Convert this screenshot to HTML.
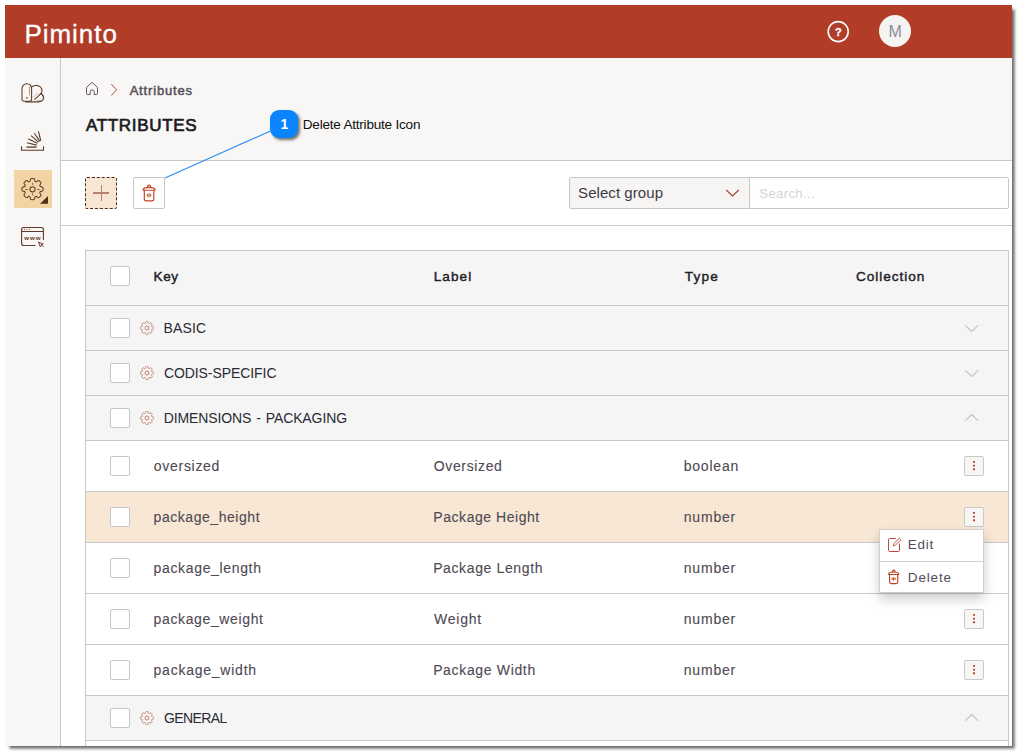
<!DOCTYPE html>
<html lang="en">
<head>
<meta charset="utf-8">
<title>Piminto - Attributes</title>
<style>
*{box-sizing:border-box;margin:0;padding:0}
html,body{width:1021px;height:756px;background:#fff;overflow:hidden}
body{font-family:"Liberation Sans",sans-serif;color:#333;position:relative}
#shadow{position:absolute;left:7px;top:7px;width:1005px;height:739px;box-shadow:2px 2px 3px .5px rgba(0,0,0,.62);clip-path:inset(-10px -10px -10px -2px)}
#frame{position:absolute;left:5px;top:5px;width:1007px;height:741px;background:#fff;overflow:hidden}
#in{position:absolute;left:-5px;top:-5px;width:1021px;height:756px}
.abs{position:absolute}
#hdr{left:5px;top:5px;width:1007px;height:53px;background:#b13c28}
#side{left:5px;top:58px;width:56px;height:700px;background:#f8f7f5;border-right:1px solid #c6c6c6}
#main{left:61px;top:58px;width:951px;height:102px;background:#f8f7f5}
#tool{left:61px;top:160px;width:951px;height:66px;background:#fff;border-top:1px solid #c9c9c9;border-bottom:1px solid #c9c9c9}
.t{position:absolute;white-space:nowrap}
.row{position:absolute;left:86px;width:922px;border-top:1px solid #c8c8c8;background:#fff}
.g{background:#f5f5f6}
.hl{background:#f8e7d5}
.cb{position:absolute;left:110px;width:20px;height:20px;border:1px solid #c6c6c6;border-radius:2px;background:#fff}
.kb{position:absolute;left:964px;width:20px;height:20px;border:1px solid #c9c9c9;border-radius:2px;background:#f8f6f4}
.kb i{position:absolute;left:8px;width:2px;height:2px;background:#b23a24}
svg{position:absolute;left:0;top:0;overflow:visible}
</style>
</head>
<body>
<div id="shadow"></div>
<div id="frame"><div id="in">
<div id="hdr" class="abs"></div>
<div id="side" class="abs"></div>
<div id="main" class="abs"></div>
<div id="tool" class="abs"></div>
<div id="brand" class="t" style="left:24.42px;top:19.19px;font-size:26px;line-height:30px;font-weight:400;color:#fff;letter-spacing:0.966px;-webkit-text-stroke:.35px #fff;">Piminto</div>
<div id="q" class="t" style="left:834.9px;top:24.69px;font-size:11px;line-height:15px;font-weight:700;color:#fff;letter-spacing:0px;-webkit-text-stroke:.3px #fff;">?</div>
<div class="abs" style="left:879px;top:15px;width:32px;height:32px;border-radius:50%;background:#f6f4f2"></div>
<div id="av" class="t" style="left:888.4px;top:22.26px;font-size:16px;line-height:20px;font-weight:400;color:#8c8c98;letter-spacing:0px;">M</div>
<div class="abs" style="left:14px;top:170px;width:38px;height:38px;background:#f2d4a4"></div>
<div id="bc" class="t" style="left:129.63px;top:82.00px;font-size:13px;line-height:17px;font-weight:400;color:#55525a;letter-spacing:0.828px;-webkit-text-stroke:.5px #55525a;">Attributes</div>
<div id="h1" class="t" style="left:86.04px;top:115.31px;font-size:17px;line-height:21px;font-weight:400;color:#1c1b1f;letter-spacing:0.666px;-webkit-text-stroke:.7px #1c1b1f;">ATTRIBUTES</div>
<div class="abs" style="left:85px;top:177px;width:32px;height:32px;border:1px dashed #4e2a1a;border-radius:2px;background:#f8e6d5"></div>
<div class="abs" style="left:93px;top:192.4px;width:16px;height:1.2px;background:#b9806f"></div><div class="abs" style="left:100.5px;top:185px;width:1px;height:16px;background:#b9806f"></div>
<div class="abs" style="left:133px;top:177px;width:32px;height:32px;border:1px solid #c6c6c6;border-radius:2px;background:#fff"></div>
<div class="abs" style="left:569px;top:177px;width:181px;height:32px;border:1px solid #c6c6c6;border-radius:2px 0 0 2px;background:#f6f5f4"></div>
<div class="abs" style="left:749px;top:177px;width:260px;height:32px;border:1px solid #c6c6c6;border-radius:0 2px 2px 0;background:#fff"></div>
<div id="sel" class="t" style="left:578.1px;top:182.90px;font-size:15px;line-height:19px;font-weight:400;color:#3c3a44;letter-spacing:0.06px;">Select group</div>
<div id="srch" class="t" style="left:759.36px;top:185.00px;font-size:13px;line-height:17px;font-weight:400;color:#d3d3d7;letter-spacing:0.402px;">Search...</div>
<div class="abs" style="left:85px;top:250px;width:924px;height:520px;border-left:1px solid #c8c8c8;border-right:1px solid #c8c8c8"></div>
<div class="row g" style="top:250px;height:55px"></div>
<div class="row g" style="top:305px;height:45px"></div>
<div class="row g" style="top:350px;height:45px"></div>
<div class="row g" style="top:395px;height:45px"></div>
<div class="row " style="top:440px;height:51px"></div>
<div class="row hl" style="top:491px;height:51px"></div>
<div class="row " style="top:542px;height:51px"></div>
<div class="row " style="top:593px;height:51px"></div>
<div class="row " style="top:644px;height:51px"></div>
<div class="row g" style="top:695px;height:45px"></div>
<div class="row " style="top:740px;height:45px"></div>
<div class="cb" style="top:266px"></div>
<div class="cb" style="top:318px"></div>
<div class="cb" style="top:363px"></div>
<div class="cb" style="top:408px"></div>
<div class="cb" style="top:456px"></div>
<div class="cb" style="top:507px"></div>
<div class="cb" style="top:558px"></div>
<div class="cb" style="top:609px"></div>
<div class="cb" style="top:660px"></div>
<div class="cb" style="top:708px"></div>
<div id="hkey" class="t" style="left:153.58px;top:267.69px;font-size:13.6px;line-height:17.6px;font-weight:400;color:#222126;letter-spacing:0.547px;-webkit-text-stroke:.42px #222126;">Key</div>
<div id="hlabel" class="t" style="left:433.7px;top:267.69px;font-size:13.6px;line-height:17.6px;font-weight:400;color:#222126;letter-spacing:1.05px;-webkit-text-stroke:.42px #222126;">Label</div>
<div id="htype" class="t" style="left:684.82px;top:267.69px;font-size:13.6px;line-height:17.6px;font-weight:400;color:#222126;letter-spacing:1.16px;-webkit-text-stroke:.42px #222126;">Type</div>
<div id="hcoll" class="t" style="left:856.04px;top:267.69px;font-size:13.6px;line-height:17.6px;font-weight:400;color:#222126;letter-spacing:0.944px;-webkit-text-stroke:.42px #222126;">Collection</div>
<div id="g0" class="t" style="left:163.61px;top:319.15px;font-size:14px;line-height:18px;font-weight:400;color:#2b2a33;letter-spacing:0.093px;word-spacing:1.2px;">BASIC</div>
<div id="g1" class="t" style="left:163.9px;top:364.15px;font-size:14px;line-height:18px;font-weight:400;color:#2b2a33;letter-spacing:-0.071px;word-spacing:1.2px;">CODIS-SPECIFIC</div>
<div id="g2" class="t" style="left:163.64px;top:409.15px;font-size:14px;line-height:18px;font-weight:400;color:#2b2a33;letter-spacing:-0.109px;word-spacing:1.2px;">DIMENSIONS - PACKAGING</div>
<div id="g3" class="t" style="left:163.99px;top:709.15px;font-size:14px;line-height:18px;font-weight:400;color:#2b2a33;letter-spacing:-0.609px;word-spacing:1.2px;">GENERAL</div>
<div id="k0" class="t" style="left:153.87px;top:456.95px;font-size:14px;line-height:18px;font-weight:400;color:#4f4a54;letter-spacing:0.7px;-webkit-text-stroke:.12px #4f4a54;">oversized</div>
<div id="l0" class="t" style="left:433.7px;top:456.95px;font-size:14px;line-height:18px;font-weight:400;color:#4f4a54;letter-spacing:0.65px;-webkit-text-stroke:.12px #4f4a54;">Oversized</div>
<div id="t0" class="t" style="left:683.73px;top:456.95px;font-size:14px;line-height:18px;font-weight:400;color:#4f4a54;letter-spacing:0.788px;-webkit-text-stroke:.12px #4f4a54;">boolean</div>
<div class="kb" style="top:456px"></div>
<div id="k1" class="t" style="left:153.59px;top:507.95px;font-size:14px;line-height:18px;font-weight:400;color:#4f4a54;letter-spacing:0.55px;-webkit-text-stroke:.12px #4f4a54;">package_height</div>
<div id="l1" class="t" style="left:433.37px;top:507.95px;font-size:14px;line-height:18px;font-weight:400;color:#4f4a54;letter-spacing:0.539px;-webkit-text-stroke:.12px #4f4a54;">Package Height</div>
<div id="t1" class="t" style="left:683.77px;top:507.95px;font-size:14px;line-height:18px;font-weight:400;color:#4f4a54;letter-spacing:0.802px;-webkit-text-stroke:.12px #4f4a54;">number</div>
<div class="kb" style="top:507px"></div>
<div id="k2" class="t" style="left:153.57px;top:558.95px;font-size:14px;line-height:18px;font-weight:400;color:#4f4a54;letter-spacing:0.653px;-webkit-text-stroke:.12px #4f4a54;">package_length</div>
<div id="l2" class="t" style="left:433.14px;top:558.95px;font-size:14px;line-height:18px;font-weight:400;color:#4f4a54;letter-spacing:0.625px;-webkit-text-stroke:.12px #4f4a54;">Package Length</div>
<div id="t2" class="t" style="left:683.77px;top:558.95px;font-size:14px;line-height:18px;font-weight:400;color:#4f4a54;letter-spacing:0.802px;-webkit-text-stroke:.12px #4f4a54;">number</div>
<div class="kb" style="top:558px"></div>
<div id="k3" class="t" style="left:153.57px;top:609.95px;font-size:14px;line-height:18px;font-weight:400;color:#4f4a54;letter-spacing:0.635px;-webkit-text-stroke:.12px #4f4a54;">package_weight</div>
<div id="l3" class="t" style="left:434.06px;top:609.95px;font-size:14px;line-height:18px;font-weight:400;color:#4f4a54;letter-spacing:0.752px;-webkit-text-stroke:.12px #4f4a54;">Weight</div>
<div id="t3" class="t" style="left:683.77px;top:609.95px;font-size:14px;line-height:18px;font-weight:400;color:#4f4a54;letter-spacing:0.802px;-webkit-text-stroke:.12px #4f4a54;">number</div>
<div class="kb" style="top:609px"></div>
<div id="k4" class="t" style="left:153.57px;top:660.95px;font-size:14px;line-height:18px;font-weight:400;color:#4f4a54;letter-spacing:0.761px;-webkit-text-stroke:.12px #4f4a54;">package_width</div>
<div id="l4" class="t" style="left:433.14px;top:660.95px;font-size:14px;line-height:18px;font-weight:400;color:#4f4a54;letter-spacing:0.658px;-webkit-text-stroke:.12px #4f4a54;">Package Width</div>
<div id="t4" class="t" style="left:683.77px;top:660.95px;font-size:14px;line-height:18px;font-weight:400;color:#4f4a54;letter-spacing:0.802px;-webkit-text-stroke:.12px #4f4a54;">number</div>
<div class="kb" style="top:660px"></div>
<div class="abs" style="left:879px;top:529px;width:105px;height:64px;background:#fff;border:1px solid #cfcfcf;box-shadow:0 6px 11px rgba(0,0,0,.2)"></div>
<div class="abs" style="left:880px;top:561px;width:103px;height:1px;background:#d0d0d0"></div>
<div id="edit" class="t" style="left:907.79px;top:536.37px;font-size:13.5px;line-height:17.5px;font-weight:400;color:#514d58;letter-spacing:0.701px;">Edit</div>
<div id="del" class="t" style="left:907.79px;top:568.57px;font-size:13.5px;line-height:17.5px;font-weight:400;color:#514d58;letter-spacing:0.855px;">Delete</div>
<div class="abs" style="left:270px;top:110px;width:27.5px;height:27.5px;border-radius:9px;background:#0a84ff;box-shadow:2px 2px 3px rgba(0,0,0,.55)"></div>
<div id="c1" class="t" style="left:280.4px;top:115.35px;font-size:14px;line-height:18px;font-weight:700;color:#fff;letter-spacing:0px;">1</div>
<div id="ctext" class="t" style="left:302.73px;top:116.09px;font-size:13.6px;line-height:17.6px;font-weight:400;color:#111;letter-spacing:-0.233px;">Delete Attribute Icon</div>
<svg width="1021" height="756" viewBox="0 0 1021 756">
<circle cx="838.2" cy="31.6" r="10" fill="none" stroke="#fff" stroke-width="1.6"/>
<path d="M270.5 131 L165 178" stroke="#2b8cf2" stroke-width="1.15" fill="none"/>
<path d="M86.5 87.4 L92 82.4 L97.5 87.4 V93.7 A0.8 0.8 0 0 1 96.7 94.5 H94.2 V91.8 A2 2 0 0 0 90.2 91.8 V94.5 H87.3 A0.8 0.8 0 0 1 86.5 93.7 Z" fill="none" stroke="#5e5566" stroke-width="1" stroke-linejoin="round"/>
<path d="M111.6 84.4 L116.6 89.8 L111.6 95.2" fill="none" stroke="#b0503f" stroke-width="1" stroke-linecap="round" stroke-linejoin="round"/>
<path d="M726.5 190.3 L732.5 196 L738.5 190.3" fill="none" stroke="#a9483b" stroke-width="1.2" stroke-linecap="round" stroke-linejoin="round"/>
<path d="M965.6 325.7 L971.7 331.5 L977.8 325.7" fill="none" stroke="#c2c2c8" stroke-width="1.1" stroke-linecap="round" stroke-linejoin="round"/>
<path d="M145.13 323.50 Q145.60 323.31 145.64 322.59 L145.67 322.24 Q145.71 321.53 146.43 321.53 L147.57 321.53 Q148.29 321.53 148.33 322.24 L148.36 322.59 Q148.40 323.31 148.87 323.50 L148.87 323.50 Q149.33 323.69 149.86 323.22 L150.13 322.98 Q150.67 322.51 151.17 323.02 L151.98 323.83 Q152.49 324.33 152.02 324.87 L151.78 325.14 Q151.31 325.67 151.50 326.13 L151.50 326.13 Q151.69 326.60 152.41 326.64 L152.76 326.67 Q153.47 326.71 153.47 327.43 L153.47 328.57 Q153.47 329.29 152.76 329.33 L152.41 329.36 Q151.69 329.40 151.50 329.87 L151.50 329.87 Q151.31 330.33 151.78 330.86 L152.02 331.13 Q152.49 331.67 151.98 332.17 L151.17 332.98 Q150.67 333.49 150.13 333.02 L149.86 332.78 Q149.33 332.31 148.87 332.50 L148.87 332.50 Q148.40 332.69 148.36 333.41 L148.33 333.76 Q148.29 334.47 147.57 334.47 L146.43 334.47 Q145.71 334.47 145.67 333.76 L145.64 333.41 Q145.60 332.69 145.13 332.50 L145.13 332.50 Q144.67 332.31 144.14 332.78 L143.87 333.02 Q143.33 333.49 142.83 332.98 L142.02 332.17 Q141.51 331.67 141.98 331.13 L142.22 330.86 Q142.69 330.33 142.50 329.87 L142.50 329.87 Q142.31 329.40 141.59 329.36 L141.24 329.33 Q140.53 329.29 140.53 328.57 L140.53 327.43 Q140.53 326.71 141.24 326.67 L141.59 326.64 Q142.31 326.60 142.50 326.13 L142.50 326.13 Q142.69 325.67 142.22 325.14 L141.98 324.87 Q141.51 324.33 142.02 323.83 L142.83 323.02 Q143.33 322.51 143.87 322.98 L144.14 323.22 Q144.67 323.69 145.13 323.50 Z" fill="none" stroke="#c28468" stroke-width="1" stroke-linejoin="round"/><circle cx="147" cy="328" r="2" fill="none" stroke="#c28468" stroke-width="1"/>
<path d="M965.6 370.7 L971.7 376.5 L977.8 370.7" fill="none" stroke="#c2c2c8" stroke-width="1.1" stroke-linecap="round" stroke-linejoin="round"/>
<path d="M145.13 368.50 Q145.60 368.31 145.64 367.59 L145.67 367.24 Q145.71 366.53 146.43 366.53 L147.57 366.53 Q148.29 366.53 148.33 367.24 L148.36 367.59 Q148.40 368.31 148.87 368.50 L148.87 368.50 Q149.33 368.69 149.86 368.22 L150.13 367.98 Q150.67 367.51 151.17 368.02 L151.98 368.83 Q152.49 369.33 152.02 369.87 L151.78 370.14 Q151.31 370.67 151.50 371.13 L151.50 371.13 Q151.69 371.60 152.41 371.64 L152.76 371.67 Q153.47 371.71 153.47 372.43 L153.47 373.57 Q153.47 374.29 152.76 374.33 L152.41 374.36 Q151.69 374.40 151.50 374.87 L151.50 374.87 Q151.31 375.33 151.78 375.86 L152.02 376.13 Q152.49 376.67 151.98 377.17 L151.17 377.98 Q150.67 378.49 150.13 378.02 L149.86 377.78 Q149.33 377.31 148.87 377.50 L148.87 377.50 Q148.40 377.69 148.36 378.41 L148.33 378.76 Q148.29 379.47 147.57 379.47 L146.43 379.47 Q145.71 379.47 145.67 378.76 L145.64 378.41 Q145.60 377.69 145.13 377.50 L145.13 377.50 Q144.67 377.31 144.14 377.78 L143.87 378.02 Q143.33 378.49 142.83 377.98 L142.02 377.17 Q141.51 376.67 141.98 376.13 L142.22 375.86 Q142.69 375.33 142.50 374.87 L142.50 374.87 Q142.31 374.40 141.59 374.36 L141.24 374.33 Q140.53 374.29 140.53 373.57 L140.53 372.43 Q140.53 371.71 141.24 371.67 L141.59 371.64 Q142.31 371.60 142.50 371.13 L142.50 371.13 Q142.69 370.67 142.22 370.14 L141.98 369.87 Q141.51 369.33 142.02 368.83 L142.83 368.02 Q143.33 367.51 143.87 367.98 L144.14 368.22 Q144.67 368.69 145.13 368.50 Z" fill="none" stroke="#c28468" stroke-width="1" stroke-linejoin="round"/><circle cx="147" cy="373" r="2" fill="none" stroke="#c28468" stroke-width="1"/>
<path d="M965.6 420.3 L971.7 414.5 L977.8 420.3" fill="none" stroke="#c2c2c8" stroke-width="1.1" stroke-linecap="round" stroke-linejoin="round"/>
<path d="M145.13 413.50 Q145.60 413.31 145.64 412.59 L145.67 412.24 Q145.71 411.53 146.43 411.53 L147.57 411.53 Q148.29 411.53 148.33 412.24 L148.36 412.59 Q148.40 413.31 148.87 413.50 L148.87 413.50 Q149.33 413.69 149.86 413.22 L150.13 412.98 Q150.67 412.51 151.17 413.02 L151.98 413.83 Q152.49 414.33 152.02 414.87 L151.78 415.14 Q151.31 415.67 151.50 416.13 L151.50 416.13 Q151.69 416.60 152.41 416.64 L152.76 416.67 Q153.47 416.71 153.47 417.43 L153.47 418.57 Q153.47 419.29 152.76 419.33 L152.41 419.36 Q151.69 419.40 151.50 419.87 L151.50 419.87 Q151.31 420.33 151.78 420.86 L152.02 421.13 Q152.49 421.67 151.98 422.17 L151.17 422.98 Q150.67 423.49 150.13 423.02 L149.86 422.78 Q149.33 422.31 148.87 422.50 L148.87 422.50 Q148.40 422.69 148.36 423.41 L148.33 423.76 Q148.29 424.47 147.57 424.47 L146.43 424.47 Q145.71 424.47 145.67 423.76 L145.64 423.41 Q145.60 422.69 145.13 422.50 L145.13 422.50 Q144.67 422.31 144.14 422.78 L143.87 423.02 Q143.33 423.49 142.83 422.98 L142.02 422.17 Q141.51 421.67 141.98 421.13 L142.22 420.86 Q142.69 420.33 142.50 419.87 L142.50 419.87 Q142.31 419.40 141.59 419.36 L141.24 419.33 Q140.53 419.29 140.53 418.57 L140.53 417.43 Q140.53 416.71 141.24 416.67 L141.59 416.64 Q142.31 416.60 142.50 416.13 L142.50 416.13 Q142.69 415.67 142.22 415.14 L141.98 414.87 Q141.51 414.33 142.02 413.83 L142.83 413.02 Q143.33 412.51 143.87 412.98 L144.14 413.22 Q144.67 413.69 145.13 413.50 Z" fill="none" stroke="#c28468" stroke-width="1" stroke-linejoin="round"/><circle cx="147" cy="418" r="2" fill="none" stroke="#c28468" stroke-width="1"/>
<path d="M965.6 720.3 L971.7 714.5 L977.8 720.3" fill="none" stroke="#c2c2c8" stroke-width="1.1" stroke-linecap="round" stroke-linejoin="round"/>
<path d="M145.13 713.50 Q145.60 713.31 145.64 712.59 L145.67 712.24 Q145.71 711.53 146.43 711.53 L147.57 711.53 Q148.29 711.53 148.33 712.24 L148.36 712.59 Q148.40 713.31 148.87 713.50 L148.87 713.50 Q149.33 713.69 149.86 713.22 L150.13 712.98 Q150.67 712.51 151.17 713.02 L151.98 713.83 Q152.49 714.33 152.02 714.87 L151.78 715.14 Q151.31 715.67 151.50 716.13 L151.50 716.13 Q151.69 716.60 152.41 716.64 L152.76 716.67 Q153.47 716.71 153.47 717.43 L153.47 718.57 Q153.47 719.29 152.76 719.33 L152.41 719.36 Q151.69 719.40 151.50 719.87 L151.50 719.87 Q151.31 720.33 151.78 720.86 L152.02 721.13 Q152.49 721.67 151.98 722.17 L151.17 722.98 Q150.67 723.49 150.13 723.02 L149.86 722.78 Q149.33 722.31 148.87 722.50 L148.87 722.50 Q148.40 722.69 148.36 723.41 L148.33 723.76 Q148.29 724.47 147.57 724.47 L146.43 724.47 Q145.71 724.47 145.67 723.76 L145.64 723.41 Q145.60 722.69 145.13 722.50 L145.13 722.50 Q144.67 722.31 144.14 722.78 L143.87 723.02 Q143.33 723.49 142.83 722.98 L142.02 722.17 Q141.51 721.67 141.98 721.13 L142.22 720.86 Q142.69 720.33 142.50 719.87 L142.50 719.87 Q142.31 719.40 141.59 719.36 L141.24 719.33 Q140.53 719.29 140.53 718.57 L140.53 717.43 Q140.53 716.71 141.24 716.67 L141.59 716.64 Q142.31 716.60 142.50 716.13 L142.50 716.13 Q142.69 715.67 142.22 715.14 L141.98 714.87 Q141.51 714.33 142.02 713.83 L142.83 713.02 Q143.33 712.51 143.87 712.98 L144.14 713.22 Q144.67 713.69 145.13 713.50 Z" fill="none" stroke="#c28468" stroke-width="1" stroke-linejoin="round"/><circle cx="147" cy="718" r="2" fill="none" stroke="#c28468" stroke-width="1"/>
<rect x="973.05" y="460.95" width="1.9" height="1.9" rx="0.5" fill="#b5341c"/>
<rect x="973.05" y="464.65" width="1.9" height="1.9" rx="0.5" fill="#b5341c"/>
<rect x="973.05" y="468.35" width="1.9" height="1.9" rx="0.5" fill="#b5341c"/>
<rect x="973.05" y="511.95" width="1.9" height="1.9" rx="0.5" fill="#b5341c"/>
<rect x="973.05" y="515.65" width="1.9" height="1.9" rx="0.5" fill="#b5341c"/>
<rect x="973.05" y="519.35" width="1.9" height="1.9" rx="0.5" fill="#b5341c"/>
<rect x="973.05" y="613.95" width="1.9" height="1.9" rx="0.5" fill="#b5341c"/>
<rect x="973.05" y="617.65" width="1.9" height="1.9" rx="0.5" fill="#b5341c"/>
<rect x="973.05" y="621.35" width="1.9" height="1.9" rx="0.5" fill="#b5341c"/>
<rect x="973.05" y="664.95" width="1.9" height="1.9" rx="0.5" fill="#b5341c"/>
<rect x="973.05" y="668.65" width="1.9" height="1.9" rx="0.5" fill="#b5341c"/>
<rect x="973.05" y="672.35" width="1.9" height="1.9" rx="0.5" fill="#b5341c"/>
<g transform="translate(142.8 185) scale(1.0)" fill="none" stroke="#c0421f" stroke-width="1.15" stroke-linecap="round" stroke-linejoin="round"><path d="M4.8 2.3 V1.6 A1.45 1.45 0 0 1 7.7 1.6 V2.3"/><path d="M0.4 5.2 V4.6 C0.4 3 2.6 2.3 6.25 2.3 S12.1 3 12.1 4.6 V5.2 Z"/><path d="M1.5 5.4 V14 A1.8 1.8 0 0 0 3.3 15.8 H9.2 A1.8 1.8 0 0 0 11 14 V5.4"/><path d="M6.25 8.6 V12 M4.6 9.4 V11.2 M7.9 9.4 V11.2" stroke-width="1.00"/></g>
<g transform="translate(888.3 570) scale(0.86)" fill="none" stroke="#c0421f" stroke-width="1.34" stroke-linecap="round" stroke-linejoin="round"><path d="M4.8 2.3 V1.6 A1.45 1.45 0 0 1 7.7 1.6 V2.3"/><path d="M0.4 5.2 V4.6 C0.4 3 2.6 2.3 6.25 2.3 S12.1 3 12.1 4.6 V5.2 Z"/><path d="M1.5 5.4 V14 A1.8 1.8 0 0 0 3.3 15.8 H9.2 A1.8 1.8 0 0 0 11 14 V5.4"/><path d="M6.25 8.6 V12 M4.6 9.4 V11.2 M7.9 9.4 V11.2" stroke-width="1.16"/></g>
<g fill="none" stroke="#c0483a" stroke-width="1" stroke-linecap="round" stroke-linejoin="round"><path d="M895.5 538.5 H889.7 A1.2 1.2 0 0 0 888.5 539.7 V550.3 A1.2 1.2 0 0 0 889.7 551.5 H898.3 A1.2 1.2 0 0 0 899.5 550.3 V544"/><path d="M893.4 545.6 L894 543.4 L899.4 538.2 L901 539.8 L895.6 545 Z" stroke-width=".9"/></g>
<g fill="none" stroke="#5e3a26" stroke-width="1.05" stroke-linecap="round" stroke-linejoin="round"><path d="M22 99.4 V88.5 a4.8 4.8 0 0 1 9.6 0 V99.4 a1.8 1.8 0 0 1 -1.8 1.8 H23.8 a1.8 1.8 0 0 1 -1.8 -1.8z"/><path d="M31.4 87 C33.6 85 37.8 84.8 40.2 86.8 C42.4 88.8 42.4 91.4 40.9 93.6"/><path d="M40.9 93.6 C43.4 94.6 44.2 97.6 43 99.8 C42 101.4 40.4 101.9 38.4 101.9 H25.8" stroke-width="1.2"/><path d="M34.8 99.4 L40.9 93.6"/><path d="M29.5 87.4 V95.2" stroke-dasharray="0.9 1.3" stroke-width="0.9" opacity=".7"/><path d="M37.5 100.4 H40.5 M34.2 96.6 L37.4 93.4" stroke-dasharray="0.7 1.3" stroke-width="0.8" opacity=".6"/><circle cx="26.9" cy="97.8" r="0.9" fill="#5e3a26" stroke="none" opacity=".85"/></g>
<g fill="none" stroke="#5e3a26" stroke-width="1.1" stroke-linecap="butt" stroke-linejoin="round"><path d="M21.5 146.2 V150.3 H43.5 V146.2"/><path d="M26.4 147.1 H36.6" stroke-width="1.3"/><path d="M26.9 142.8 L36.7 145.1"/><path d="M28.2 139 L37.6 143.2"/><path d="M31.1 135.6 L38.6 142.2"/><path d="M34.4 133.2 L39.8 141.4"/><path d="M38.5 131.3 L40.8 141"/></g>
<path d="M29.45 181.75 Q30.21 181.44 30.28 180.26 L30.32 179.68 Q30.39 178.51 31.57 178.51 L33.43 178.51 Q34.61 178.51 34.68 179.68 L34.72 180.26 Q34.79 181.44 35.55 181.75 L35.55 181.75 Q36.30 182.06 37.18 181.28 L37.62 180.90 Q38.50 180.12 39.33 180.95 L40.65 182.27 Q41.48 183.10 40.70 183.98 L40.32 184.42 Q39.54 185.30 39.85 186.05 L39.85 186.05 Q40.16 186.81 41.34 186.88 L41.92 186.92 Q43.09 186.99 43.09 188.17 L43.09 190.03 Q43.09 191.21 41.92 191.28 L41.34 191.32 Q40.16 191.39 39.85 192.15 L39.85 192.15 Q39.54 192.90 40.32 193.78 L40.70 194.22 Q41.48 195.10 40.65 195.93 L39.33 197.25 Q38.50 198.08 37.62 197.30 L37.18 196.92 Q36.30 196.14 35.55 196.45 L35.55 196.45 Q34.79 196.76 34.72 197.94 L34.68 198.52 Q34.61 199.69 33.43 199.69 L31.57 199.69 Q30.39 199.69 30.32 198.52 L30.28 197.94 Q30.21 196.76 29.45 196.45 L29.45 196.45 Q28.70 196.14 27.82 196.92 L27.38 197.30 Q26.50 198.08 25.67 197.25 L24.35 195.93 Q23.52 195.10 24.30 194.22 L24.68 193.78 Q25.46 192.90 25.15 192.15 L25.15 192.15 Q24.84 191.39 23.66 191.32 L23.08 191.28 Q21.91 191.21 21.91 190.03 L21.91 188.17 Q21.91 186.99 23.08 186.92 L23.66 186.88 Q24.84 186.81 25.15 186.05 L25.15 186.05 Q25.46 185.30 24.68 184.42 L24.30 183.98 Q23.52 183.10 24.35 182.27 L25.67 180.95 Q26.50 180.12 27.38 180.90 L27.82 181.28 Q28.70 182.06 29.45 181.75 Z" fill="none" stroke="#5e3a26" stroke-width="1.05" stroke-linejoin="round"/><circle cx="32.5" cy="189.3" r="2.6" fill="none" stroke="#5e3a26" stroke-width="1.05"/><path d="M32.5 182.8 V184.8 M32.5 193.4 V195.4 M25.4 189.5 H27.8 M37.2 189.5 H39.6" stroke="#9a3a4e" stroke-width="0.9" fill="none"/><path d="M40 203.8 H48 V196 Z" fill="#5a2c14"/>
<g fill="none" stroke="#5e3a26" stroke-width="1.1" stroke-linecap="round" stroke-linejoin="round"><path d="M43.4 239.5 V229.6 a2.1 2.1 0 0 0 -2.1 -2.1 H23.7 a2.1 2.1 0 0 0 -2.1 2.1 V243.2 a2.3 2.3 0 0 0 2.3 2.3 H24.4"/><path d="M21.6 231.5 H43.4"/><path d="M25 245.5 H35.8" stroke-dasharray="1.1 0.7" stroke-width="1.1"/><path d="M24 229.5 H30.4" stroke-dasharray="0.9 1.7" stroke-width="1" stroke-linecap="butt" stroke="#8a3a5a"/><path d="M38.6 242.3 L43.3 244 L41.5 244.7 L43.3 246.7 M38.6 242.3 L40.3 246.9 L41.5 244.7" stroke-width="0.9"/></g>
<text x="24.3" y="240" font-family="Liberation Sans, sans-serif" font-size="6.2" font-weight="700" fill="#5e3a26" textLength="16.4" lengthAdjust="spacing">www</text>
</svg>
</div></div>
</body>
</html>
